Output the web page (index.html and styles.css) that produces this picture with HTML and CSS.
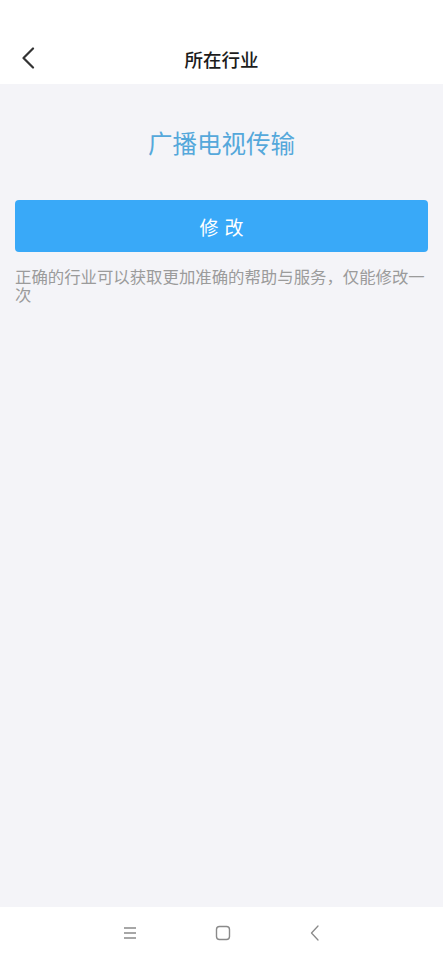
FILE: index.html
```html
<!DOCTYPE html>
<html lang="zh-CN">
<head>
<meta charset="utf-8">
<title>所在行业</title>
<link rel="stylesheet" href="styles.css">
</head>
<body>
<div class="page">
  <header class="header">
    <span class="back">
      <svg width="14" height="22" viewBox="0 0 14 22"><path d="M12 1.5 L2.5 11 L12 20.5" fill="none" stroke="#333" stroke-width="2.2" stroke-linecap="round" stroke-linejoin="round"/></svg>
    </span>
    <h1 class="title">所在行业</h1>
  </header>
  <main class="main">
    <div class="industry">广播电视传输</div>
    <button class="btn">修改</button>
    <p class="hint">正确的行业可以获取更加准确的帮助与服务，仅能修改一次</p>
  </main>
  <nav class="navbar">
    <svg class="nav-icon" width="14" height="14" viewBox="0 0 14 14"><path d="M1 2 H13 M1 7 H13 M1 12 H13" stroke="#8a8a8a" stroke-width="1.3" fill="none"/></svg>
    <svg class="nav-icon" width="16" height="16" viewBox="0 0 16 16"><rect x="1.5" y="1.5" width="13" height="13" rx="3" fill="none" stroke="#8a8a8a" stroke-width="1.4"/></svg>
    <svg class="nav-icon" width="12" height="16" viewBox="0 0 12 16"><path d="M9 1 L2.5 8 L9 15" fill="none" stroke="#8a8a8a" stroke-width="1.3" stroke-linecap="round" stroke-linejoin="round"/></svg>
  </nav>
</div>
</body>
</html>
```
FILE: styles.css
```css
html, body {
  margin: 0;
  padding: 0;
}
body {
  font-family: "Noto Sans CJK SC", "Noto Sans", sans-serif;
  background: #ffffff;
}
.page {
  width: 443px;
  height: 960px;
  display: flex;
  flex-direction: column;
}
.header {
  height: 84px;
  background: #ffffff;
  position: relative;
  display: flex;
  align-items: center;
  justify-content: center;
  padding-top: 34px;
  box-sizing: border-box;
}
.back {
  position: absolute;
  left: 21px;
  top: 47px;
  width: 14px;
  height: 22px;
  display: flex;
}
.title {
  margin: 0;
  font-size: 18.5px;
  font-weight: 500;
  color: #1c1c1c;
  line-height: 26px;
}
.main {
  flex: 1;
  background: #f4f4f8;
  padding: 0 15px;
  display: flex;
  flex-direction: column;
}
.industry {
  margin-top: 43px;
  text-align: center;
  font-size: 24.5px;
  line-height: 32px;
  color: #55a8db;
}
.btn {
  margin-top: 41px;
  height: 52px;
  width: 100%;
  border: none;
  border-radius: 4px;
  background: #39a9f8;
  color: #ffffff;
  font-family: "Noto Sans CJK SC", "Noto Sans", sans-serif;
  font-size: 19px;
  letter-spacing: 6px;
  text-indent: 6px;
  padding: 0;
}
.hint {
  margin: 15px 0 0;
  font-size: 16.4px;
  line-height: 18px;
  color: #9b9b9b;
}
.navbar {
  height: 53px;
  background: #ffffff;
  display: flex;
  align-items: center;
  justify-content: center;
  gap: 78px;
  padding-bottom: 2px;
  box-sizing: border-box;
}
.nav-icon {
  display: block;
}
```
